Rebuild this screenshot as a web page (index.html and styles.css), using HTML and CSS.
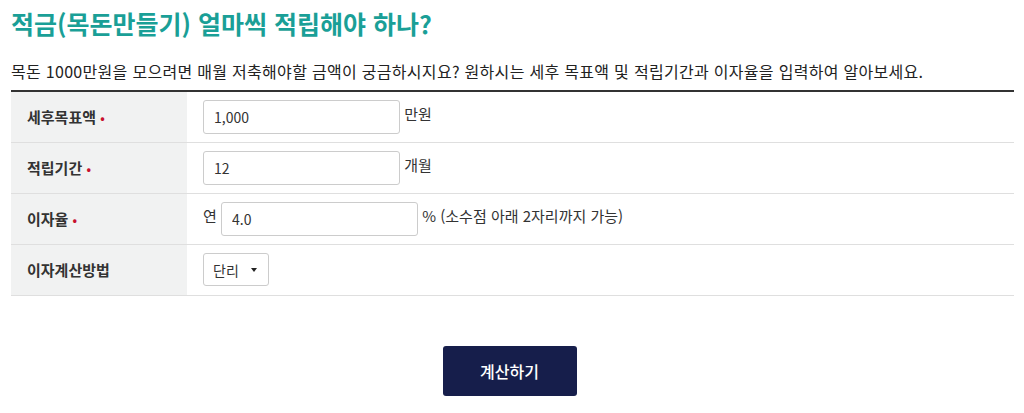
FILE: index.html
```html
<!DOCTYPE html>
<html lang="ko">
<head>
    <meta charset="UTF-8">
    <meta name="viewport" content="width=device-width, initial-scale=1.0">
    <title>적금 계산기</title>
    <link rel="stylesheet" href="styles.css">
</head>
<body>

    <div id="saving">

        <h2>적금(목돈만들기) 얼마씩 적립해야 하나?</h2>
        <p class="desc">목돈 1000만원을 모으려면 매월 저축해야할 금액이 궁금하시지요? 원하시는 세후 목표액 및 적립기간과 이자율을 입력하여 알아보세요.</p>

        <table class="form-table">
            <tr>
                <th>세후목표액 <span class="req">•</span></th>
                <td><input type="text" class="field" value="1,000"> <span class="unit">만원</span></td>
            </tr>
            <tr>
                <th>적립기간 <span class="req">•</span></th>
                <td><input type="text" class="field" value="12"> <span class="unit">개월</span></td>
            </tr>
            <tr>
                <th>이자율 <span class="req">•</span></th>
                <td><span class="pre">연</span> <input type="text" class="field" value="4.0"> <span class="unit">% (소수점 아래 2자리까지 가능)</span></td>
            </tr>
            <tr>
                <th>이자계산방법</th>
                <td>
                    <div class="select">
                        <span>단리</span>
                        <span class="arrow"></span>
                    </div>
                </td>
            </tr>
        </table>

        <div class="actions">
            <button class="calc">계산하기</button>
        </div>

    </div>

</body>
</html>
```

FILE: styles.css
```css
body {
    font-family: "Noto Sans CJK KR", "Noto Sans", sans-serif;
    background-color: #fff;
    color: #333;
    margin: 0;
    padding: 0 10px 0 11px;
}

h2 {
    margin: 0;
    padding-top: 5px;
    font-size: 25px;
    line-height: 36px;
    font-weight: 700;
    color: #1a9f97;
}

.desc {
    margin: 18px 0 0;
    font-size: 16px;
    line-height: 24px;
    letter-spacing: 0.3px;
    color: #222;
}

.form-table {
    width: 100%;
    margin-top: 7px;
    border-collapse: collapse;
    border-top: 2px solid #333;
}

.form-table tr {
    height: 51px;
    border-bottom: 1px solid #dfdfdf;
}

.form-table th {
    width: 176px;
    padding: 0 0 0 16px;
    box-sizing: border-box;
    text-align: left;
    font-size: 15px;
    font-weight: 700;
    color: #333;
    background-color: #f1f2f2;
}

.form-table td {
    padding: 0 0 0 16px;
    font-size: 15px;
    color: #333;
}

.req {
    color: #c8102e;
    font-size: 12px;
}

.field {
    width: 197px;
    height: 34px;
    box-sizing: border-box;
    padding: 0 10px;
    border: 1px solid #ccc;
    border-radius: 3px;
    font-family: "Noto Sans CJK KR", "Noto Sans", sans-serif;
    font-size: 14px;
    color: #333;
    vertical-align: middle;
    outline: none;
}

.unit, .pre {
    vertical-align: middle;
    position: relative;
    top: -3px;
}

.select {
    display: inline-flex;
    align-items: center;
    gap: 12px;
    height: 33px;
    box-sizing: border-box;
    padding: 0 11px 0 9px;
    border: 1px solid #ccc;
    border-radius: 3px;
    font-size: 14px;
    vertical-align: middle;
}

.arrow {
    width: 0;
    height: 0;
    border-left: 3px solid transparent;
    border-right: 3px solid transparent;
    border-top: 4px solid #222;
}

.actions {
    text-align: center;
    padding-top: 50px;
}

.calc {
    width: 134px;
    height: 50px;
    margin-right: 6px;
    border: none;
    border-radius: 3px;
    background-color: #161e4b;
    color: #fff;
    font-family: "Noto Sans CJK KR", "Noto Sans", sans-serif;
    font-size: 16px;
    font-weight: 500;
    cursor: pointer;
}
```
